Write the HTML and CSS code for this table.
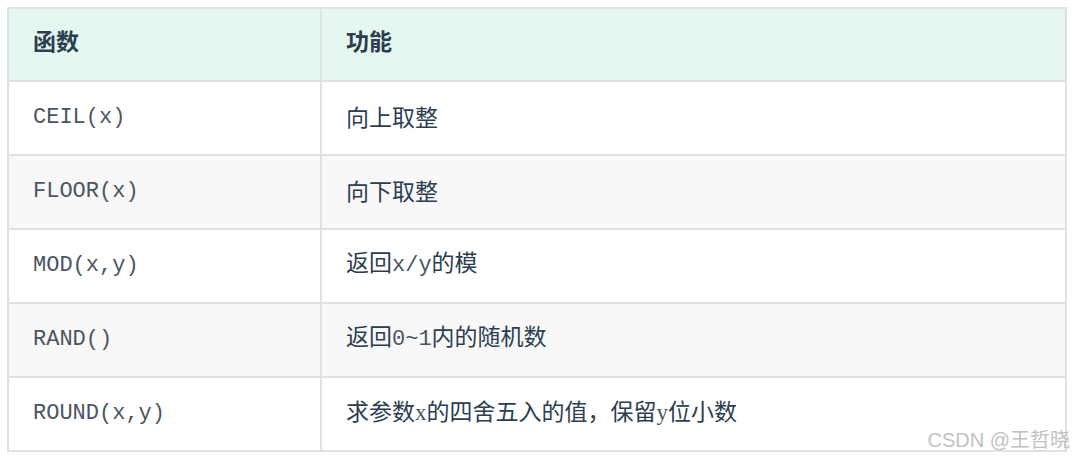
FILE: index.html
```html
<!DOCTYPE html>
<html lang="zh-CN">
<head>
<meta charset="utf-8">
<title>函数</title>
<link rel="stylesheet" href="styles.css">
</head>
<body>
<div class="page">
  <table class="fn-table">
    <thead>
      <tr><th class="c1">函数</th><th class="c2">功能</th></tr>
    </thead>
    <tbody>
      <tr><td class="c1"><code>CEIL(x)</code></td><td class="c2">向上取整</td></tr>
      <tr class="alt"><td class="c1"><code>FLOOR(x)</code></td><td class="c2">向下取整</td></tr>
      <tr><td class="c1"><code>MOD(x,y)</code></td><td class="c2">返回<code>x/y</code>的模</td></tr>
      <tr class="alt"><td class="c1"><code>RAND()</code></td><td class="c2">返回<code>0~1</code>内的随机数</td></tr>
      <tr><td class="c1"><code>ROUND(x,y)</code></td><td class="c2">求参数<span class="serif">x</span>的四舍五入的值，保留<span class="serif">y</span>位小数</td></tr>
    </tbody>
  </table>
  <div class="watermark">CSDN @王哲晓</div>
</div>
</body>
</html>
```

FILE: styles.css
```css
html, body {
  margin: 0;
  padding: 0;
  background: #ffffff;
}
.page {
  position: relative;
  width: 1074px;
  height: 460px;
  padding: 7px 0 0 7px;
  box-sizing: border-box;
}
.fn-table {
  border-collapse: collapse;
  width: 1060px;
  font-family: "Noto Sans CJK SC", "Noto Sans", sans-serif;
  font-size: 23px;
  color: #2c3e50;
}
.fn-table th,
.fn-table td {
  border: 2px solid #dfe2e5;
  text-align: left;
  padding: 0 0 5px 24px;
  height: 67px;
  line-height: 30px;
}
.fn-table th {
  background: #e6f7ef;
  font-weight: 700;
  height: 61px;
  padding-bottom: 10px;
}
.fn-table .c1 {
  width: 287px;
}
.fn-table tr.alt td {
  background: #f8f8f8;
}
code {
  font-family: "Courier New", Courier, "Liberation Mono", monospace;
  font-size: 22px;
  color: #4a5561;
}
.serif {
  font-family: "Liberation Serif", serif;
  color: #4a5561;
}
.watermark {
  position: absolute;
  right: 4px;
  bottom: 7px;
  font-family: "Liberation Sans", "Noto Sans CJK SC", sans-serif;
  font-size: 20px;
  color: #c2c2c2;
}
```
